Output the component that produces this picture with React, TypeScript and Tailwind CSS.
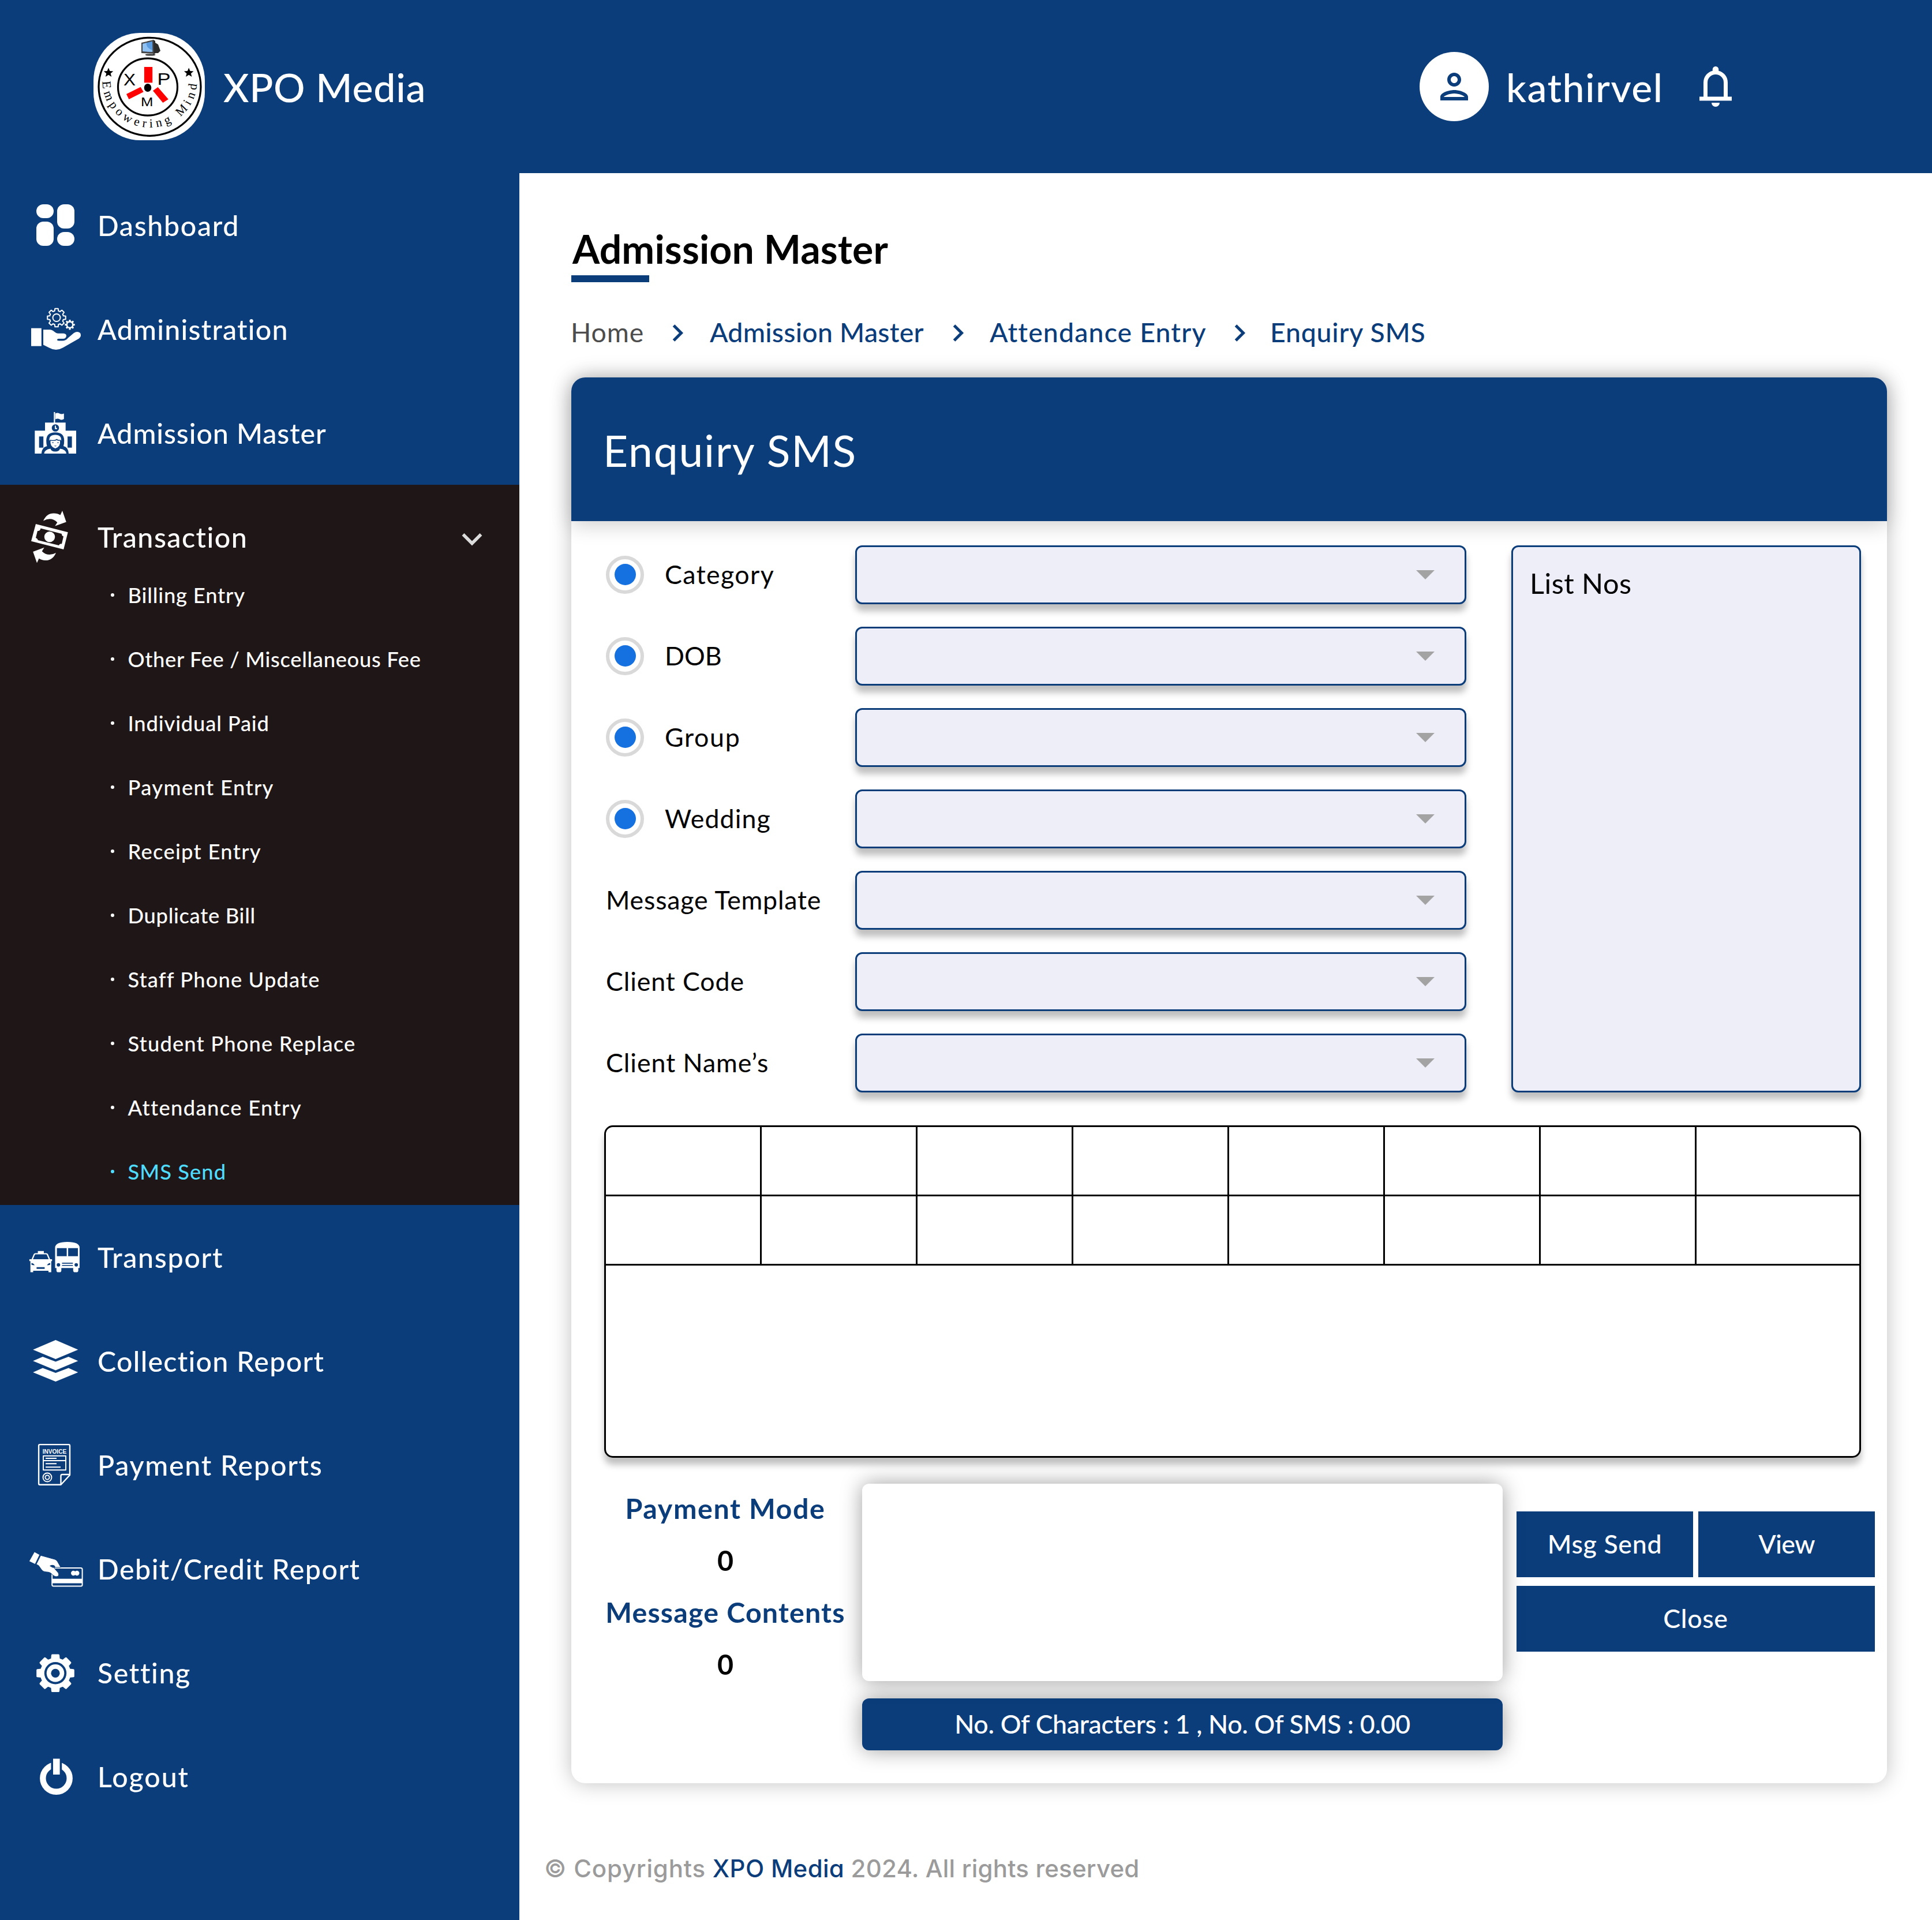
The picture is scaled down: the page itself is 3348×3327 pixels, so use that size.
import type { ReactNode } from "react";

const NAVY = "#0b3d7b";

/** Closed outline of a cog wheel with flat, slightly tapered teeth. */
function cog(cx: number, cy: number, outer: number, inner: number, teeth: number, rootHalf: number, tipHalf: number) {
  const pts: string[] = [];
  for (let i = 0; i < teeth; i++) {
    const a = (i * 2 * Math.PI) / teeth - Math.PI / 2;
    const corners: [number, number][] = [
      [inner, a - rootHalf],
      [outer, a - tipHalf],
      [outer, a + tipHalf],
      [inner, a + rootHalf],
    ];
    for (const [r, t] of corners) {
      pts.push(`${(cx + r * Math.cos(t)).toFixed(2)} ${(cy + r * Math.sin(t)).toFixed(2)}`);
    }
  }
  return `M${pts.join("L")}Z`;
}

function MenuIcon({ children }: { children: ReactNode }) {
  return (
    <svg viewBox="0 0 96 96" className="size-24 shrink-0 overflow-visible" fill="#fff">
      {children}
    </svg>
  );
}

const DashboardIcon = () => (
  <MenuIcon>
    <rect x="15" y="12" width="30" height="24" rx="12" />
    <rect x="15" y="42" width="30" height="42" rx="12" />
    <rect x="51" y="12" width="30" height="42" rx="12" />
    <rect x="51" y="60" width="30" height="24" rx="12" />
  </MenuIcon>
);

const AdministrationIcon = () => (
  <MenuIcon>
    <rect x="6" y="46.7" width="17.8" height="31" />
    <path d="M27 49.3H38C45 49.3 47 55.7 53 55.7H62Q67 56 67 60Q66.500 65 61 65H53.500Q51 65.300 51 66.800Q51 68.500 54 68.500H60Q66 68.500 70 63.500L80 55Q86 51 91 55Q94 60 89 64.500L61 80.500Q49 87.500 37 80.500L27 75.500Z" />
    <path d={cog(50, 28.5, 16, 12.2, 8, 0.27, 0.17)} fill="none" stroke="#fff" strokeWidth="2" strokeLinejoin="round" />
    <circle cx="50" cy="28.500" r="6.500" fill="none" stroke="#fff" strokeWidth="2" />
    <path d={cog(73, 40.7, 8.8, 6.4, 8, 0.28, 0.16)} />
    <circle cx="73" cy="40.700" r="4" fill={NAVY} />
  </MenuIcon>
);

const AdmissionIcon = () => (
  <MenuIcon>
    <path d="M12.300 44.300H30V30.300H65.700V44.300H84V84H12.300Z" />
    <rect x="45.300" y="12" width="2.200" height="19" />
    <path d="M48 14.500Q51.500 12.500 55 14.500T62.800 14.500V24Q59 26.500 55.500 24.500T48 24.500Z" />
    <ellipse cx="48" cy="39.500" rx="6.300" ry="6.300" fill={NAVY} />
    <path d="M48 35.500V40.500H51" fill="none" stroke="#fff" strokeWidth="1.800" />
    <rect x="19.700" y="54.300" width="7.500" height="19.400" fill={NAVY} />
    <rect x="69.100" y="54.300" width="7.500" height="19.400" fill={NAVY} />
    <path d="M23.800 84Q24.500 73 33.500 71Q32.200 68 32.200 62Q32 47.300 47.800 47.300Q63.500 47.300 63.200 62Q63.200 68 62 71Q70.500 73 71 84Z" fill={NAVY} />
    <path d="M37.500 62Q36.500 51.500 47.800 51.500Q59 51.500 58 62L57 60Q52.500 61 50.500 58.500Q46 62 38.500 60Z" />
    <path d="M39.500 61.500Q38 72 47.800 75Q57.500 72 56 61.500Q52 62.500 50.500 60.500Q46.500 63 39.500 61.500Z" />
    <path d="M42 65H45M51 65H54M46.500 70.500Q48 71.500 49.500 70.500" fill="none" stroke={NAVY} strokeWidth="1" />
    <path d="M28.500 84Q29 77 39.500 75.500Q41 80.500 47.800 80.500Q54.500 80.500 56 75.500Q66.500 77 67 84Z" />
  </MenuIcon>
);

const TransactionIcon = () => (
  <MenuIcon>
    <path
      fillRule="evenodd"
      d="M14 26L69.700 40.200L62.200 70L6 55.700ZM22.500 33.500Q21.500 38.500 17 38L14 50Q18 52 17.500 54L54 63Q55.500 59.500 59 60.500L62 47.500Q58.500 46 59 43Z"
    />
    <circle cx="38" cy="48.200" r="9.200" />
    <path d="M27 20.500Q33 7 45.600 7.400Q52 7.500 56.500 10.600L60 3L66.800 22.500L47.300 29.600L51.300 23.200Q41 13 27 20.500Z" />
    <path d="M49 75.900Q43 89.400 30.400 89Q24 88.900 19.500 85.800L16 93.400L9.200 73.900L28.700 66.800L24.700 73.200Q35 83.400 49 75.900Z" />
  </MenuIcon>
);

const TransportIcon = () => (
  <MenuIcon>
    <rect x="17.600" y="37.800" width="10.400" height="4.800" />
    <path d="M7.500 53L11.500 43.500Q12 42.500 13.500 42.500H32Q33.500 42.500 34 43.500L38 53" fill="none" stroke="#fff" strokeWidth="2.200" />
    <path fillRule="evenodd" d="M2.900 52H42.200V55.200H40.800V74.600H36V72H9.500V74.600H4.700V55.200H2.900ZM6.500 58.500V61.500Q9 62.500 12 62.500Q10.500 59 6.500 58.500ZM39 58.500V61.500Q36.500 62.500 33.500 62.500Q35 59 39 58.500ZM15.400 65.700V68.700H29.400V65.700Z" />
    <path
      fillRule="evenodd"
      d="M47.500 32Q47.500 22 68.700 22Q89.900 22 89.900 32V67.300H87.700V71.500Q87.700 74.600 84.500 74.600H82Q78.800 74.600 78.800 71.500V67.300H58.300V71.500Q58.300 74.600 55.200 74.600H53Q49.800 74.600 49.800 71.500V67.300H47.500ZM50.600 32.800V46.800H67.600V32.800ZM70.100 32.800V46.800H87V32.800ZM59.500 58V59.800H78.300V58ZM59.500 62V63.500H78.300V62Z"
    />
    <circle cx="53.300" cy="61.800" r="3" fill={NAVY} />
    <circle cx="84.100" cy="61.800" r="3" fill={NAVY} />
  </MenuIcon>
);

const CollectionIcon = () => (
  <MenuIcon>
    <path d="M48.400 12L87.300 28.800L48.400 45L9.200 28.800Z" />
    <path d="M26 41L48.400 49.500L70.700 41L87.300 48.300L48.400 64.500L9.200 48.300Z" />
    <path d="M26 60.600L48.400 69.100L70.700 60.600L87.300 67.900L48.400 84.100L9.200 67.900Z" />
  </MenuIcon>
);

const InvoiceIcon = () => (
  <MenuIcon>
    <g fill="none" stroke="#fff" strokeWidth="2.400" strokeLinejoin="round">
      <path d="M21 13.100H71Q73 13.100 73 15.100V66L57.500 82.800H21Q19.100 82.800 19.100 80.800V15.100Q19.100 13.100 21 13.100Z" />
      <path d="M57.500 82V67.500Q57.500 65 60 65H73" />
      <g strokeWidth="1.900">
        <rect x="27" y="32.800" width="39" height="24.500" />
        <path d="M27 41H66M31 37H50M31 46.200H50M31 52.200H57" />
        <circle cx="34" cy="70" r="7.500" />
        <circle cx="34" cy="70" r="3.600" />
      </g>
    </g>
    <text x="25.700" y="28.500" fontSize="11.500" fontWeight="700" textLength="41.500" lengthAdjust="spacingAndGlyphs" className="font-['Liberation_Sans',sans-serif]">
      INVOICE
    </text>
  </MenuIcon>
);

const CardIcon = () => (
  <MenuIcon>
    <rect x="42.200" y="46.900" width="52.400" height="31.600" rx="2.500" fill="none" stroke="#fff" strokeWidth="2" />
    <rect x="42" y="65.700" width="53" height="7.800" />
    <circle cx="79.200" cy="56" r="4.200" />
    <circle cx="85.300" cy="56" r="4.200" />
    <path d="M11.800 19.600L20.300 24.300L12.700 40L2.900 35.300Z" />
    <path
      d="M22.500 25.200L47 32Q50.500 33 52 36.500L57.400 46H45L53 55.500Q55 59 52.500 61.500Q49 63 45 60.500L39.500 55.500Q36 53.800 31 53.800Q26.500 53.500 24 50L19 43L14.800 40.600Z"
      stroke={NAVY}
      strokeWidth="1"
    />
    <path d="M38 43.500Q41 40.500 46 42.500Q48.500 45 47.500 46.500H43Z" fill={NAVY} />
  </MenuIcon>
);

const SettingIcon = () => (
  <MenuIcon>
    <path d={cog(48, 49.3, 31.5, 25, 8, 0.24, 0.17)} stroke="#fff" strokeWidth="3.500" strokeLinejoin="round" />
    <circle cx="48" cy="49.300" r="19.200" fill={NAVY} />
    <circle cx="48" cy="49.300" r="15.300" />
    <circle cx="48" cy="49.300" r="7.600" fill={NAVY} />
  </MenuIcon>
);

const LogoutIcon = () => (
  <MenuIcon>
    <circle cx="49.500" cy="51.600" r="23.200" fill="none" stroke="#fff" strokeWidth="10.400" />
    <rect x="40.400" y="18" width="18.800" height="24" fill={NAVY} />
    <rect x="44" y="17.500" width="11.600" height="27.500" />
  </MenuIcon>
);

function Logo() {
  const star = "M0 -8.500L2.300 -2.900L8.300 -2.600L3.700 1.200L5.200 7L0 3.800L-5.200 7L-3.700 1.200L-8.300 -2.600L-2.300 -2.900Z";
  return (
    <svg viewBox="0 0 193 186" className="h-[186px] w-[193px] shrink-0">
      <rect width="193" height="186" rx="81" ry="83" fill="#fff" />
      <ellipse cx="97.500" cy="93.300" rx="88.500" ry="85" fill="none" stroke="#000" strokeWidth="3.200" />
      <ellipse cx="94" cy="93.700" rx="51.500" ry="49.500" fill="none" stroke="#000" strokeWidth="3.200" />
      <g fill="#f00">
        <path d="M87.900 59H102.200V86.300H87.900Z" />
        <path d="M57 106L81.600 93.700L86.700 102.300L61.400 115Z" />
        <path d="M103 100.300L111.600 94L129.800 115L120.300 121Z" />
      </g>
      <ellipse cx="94" cy="95" rx="6.300" ry="7" />
      <path d={star} transform="translate(26 69)" />
      <path d={star} transform="translate(165.200 69)" />
      <g className="font-['Liberation_Sans',sans-serif]" fontSize="30">
        <text x="52" y="91" textLength="21" lengthAdjust="spacingAndGlyphs">X</text>
        <text x="110.500" y="90" textLength="23" lengthAdjust="spacingAndGlyphs">P</text>
        <text x="82" y="127" fontSize="22.500" textLength="21.500" lengthAdjust="spacingAndGlyphs">M</text>
      </g>
      <path id="motto-arc" d="M15.500 84A82 80 0 0 0 179.500 84" fill="none" />
      <text fontSize="21.500" className="font-['Liberation_Serif',serif]" textLength="249">
        <textPath href="#motto-arc" textLength="249">Empowering Mind</textPath>
      </text>
      <path d="M104 12L107 14V36L103 37ZM107 17L112 20L116 31L112 35L107 35Z" fill="#2b2b2b" />
      <path d="M83 17L104 12L105 36L83 35Z" fill="#444" />
      <path d="M85 19L102 14.500L102.500 33L85 32Z" fill="#5b9be0" />
      <path d="M85 19L92 17.200Q90 25 102 30V33L85 32Z" fill="#8fc1f2" />
      <ellipse cx="98.500" cy="38" rx="9" ry="1.600" fill="#333" />
    </svg>
  );
}

type Entry = { label: string; track: string };

const topMenu: (Entry & { icon: ReactNode })[] = [
  { label: "Dashboard", track: "tracking-[0.0340em]", icon: <DashboardIcon /> },
  { label: "Administration", track: "tracking-[0.0250em]", icon: <AdministrationIcon /> },
  { label: "Admission Master", track: "tracking-[0.0183em]", icon: <AdmissionIcon /> },
];

const transactionMenu: Entry[] = [
  { label: "Billing Entry", track: "tracking-[0.0220em]" },
  { label: "Other Fee / Miscellaneous Fee", track: "tracking-[0.0175em]" },
  { label: "Individual Paid", track: "tracking-[0.0220em]" },
  { label: "Payment Entry", track: "tracking-[0.0370em]" },
  { label: "Receipt Entry", track: "tracking-[0.0350em]" },
  { label: "Duplicate Bill", track: "tracking-[0.0180em]" },
  { label: "Staff Phone Update", track: "tracking-[0.0300em]" },
  { label: "Student Phone Replace", track: "tracking-[0.0310em]" },
  { label: "Attendance Entry", track: "tracking-[0.0366em]" },
  { label: "SMS Send", track: "tracking-[0.0280em]" },
];

const bottomMenu: (Entry & { icon: ReactNode })[] = [
  { label: "Transport", track: "tracking-[0.0346em]", icon: <TransportIcon /> },
  { label: "Collection Report", track: "tracking-[0.0260em]", icon: <CollectionIcon /> },
  { label: "Payment Reports", track: "tracking-[0.0355em]", icon: <InvoiceIcon /> },
  { label: "Debit/Credit Report", track: "tracking-[0.0300em]", icon: <CardIcon /> },
  { label: "Setting", track: "tracking-[0.0330em]", icon: <SettingIcon /> },
  { label: "Logout", track: "tracking-[0.0390em]", icon: <LogoutIcon /> },
];

const fields: (Entry & { radio?: boolean })[] = [
  { label: "Category", track: "tracking-[0.0320em]", radio: true },
  { label: "DOB", track: "tracking-[0.0000em]", radio: true },
  { label: "Group", track: "tracking-[0.0382em]", radio: true },
  { label: "Wedding", track: "tracking-[0.0240em]", radio: true },
  { label: "Message Template", track: "tracking-[0.0182em]" },
  { label: "Client Code", track: "tracking-[0.0200em]" },
  { label: "Client Name’s", track: "tracking-[0.0215em]" },
];

function MenuRow({ label, track, icon }: Entry & { icon: ReactNode }) {
  return (
    <li className="flex h-[180px] items-center gap-[25px] pl-12">
      {icon}
      <span className={`text-[48.4px] whitespace-nowrap ${track}`}>{label}</span>
    </li>
  );
}

function Sidebar() {
  return (
    <nav className="w-[900px] shrink-0 bg-[#0b3d7b] font-medium text-white">
      <ul>
        {topMenu.map((m) => (
          <MenuRow key={m.label} {...m} />
        ))}
        <li className="bg-[#1f1617] pt-[46px] pb-1">
          <div className="flex h-[88px] items-center gap-[25px] pr-16 pl-12">
            <TransactionIcon />
            <span className="text-[48.4px] tracking-[0.0300em]">Transaction</span>
            <svg viewBox="0 0 36 24" className="mt-[10px] ml-auto h-6 w-9" fill="none" stroke="#dcdcdc" strokeWidth="5.500">
              <path d="M2.500 3L18 18.500L33.500 3" />
            </svg>
          </div>
          <ul>
            {transactionMenu.map((m) => (
              <li
                key={m.label}
                className={`flex h-[111px] items-center gap-[23.5px] pl-48 text-[36.4px] whitespace-nowrap ${m.track} ${
                  m.label === "SMS Send" ? "text-[#4fdcff]" : ""
                }`}
              >
                <span className="mt-0.5 size-1.5 rounded-full bg-current" />
                <span className="mt-[3px]">{m.label}</span>
              </li>
            ))}
          </ul>
        </li>
        {bottomMenu.map((m) => (
          <MenuRow key={m.label} {...m} />
        ))}
      </ul>
    </nav>
  );
}

function Header() {
  return (
    <header className="flex h-[300px] items-center bg-[#0b3d7b] pr-[333px] pl-[162px] font-medium text-white">
      <Logo />
      <span className="ml-8 pt-px text-[68px] tracking-[0.0111em]">XPO Media</span>
      <div className="ml-auto flex size-[120px] items-center justify-center rounded-full bg-white">
        <svg viewBox="0 0 24 24" className="size-[72px]" fill={NAVY}>
          <path d="M12 6c1.100 0 2 .9 2 2s-.9 2-2 2-2-.9-2-2 .9-2 2-2m0 10c2.700 0 5.800 1.290 6 2H6c.23-.72 3.310-2 6-2m0-12C9.790 4 8 5.790 8 8s1.790 4 4 4 4-1.790 4-4-1.790-4-4-4m0 10c-2.670 0-8 1.340-8 4v2h16v-2c0-2.660-5.330-4-8-4" />
        </svg>
      </div>
      <span className="ml-[30px] w-[321px] pt-px text-[68px] tracking-[0.0216em]">kathirvel</span>
      <svg viewBox="0 0 24 24" className="-mt-px size-[84px]" fill="#fff">
        <path d="M4 19v-2h2v-7q0-2.075 1.250-3.687T10.500 4.200v-.7q0-.625.438-1.062T12 2t1.063.438T13.500 3.500v.7q2 .5 3.250 2.113T18 10v7h2v2zm8 3q-.825 0-1.412-.587T10 20h4q0 .825-.587 1.413T12 22m-4-5h8v-7q0-1.650-1.175-2.825T12 6T9.175 7.175T8 10z" />
      </svg>
    </header>
  );
}

function Chevron() {
  return (
    <svg viewBox="0 0 20 30" className="mt-px h-[30px] w-5" fill="none" stroke={NAVY} strokeWidth="5">
      <path d="M2.500 2L15.500 15L2.500 28" />
    </svg>
  );
}

function Breadcrumb() {
  return (
    <div className="mt-[51px] flex h-[72px] items-center text-[46.4px] font-medium whitespace-nowrap text-[#0b3d7b]">
      <span className="w-[175px] -translate-x-px font-normal tracking-[0.0180em] text-[#4d4d4d]">Home</span>
      <span className="w-[65px]"><Chevron /></span>
      <span className="w-[421px] tracking-[0.0056em]">Admission Master</span>
      <span className="w-[64px]"><Chevron /></span>
      <span className="w-[424px] tracking-[0.0250em]">Attendance Entry</span>
      <span className="w-[62px]"><Chevron /></span>
      <span className="tracking-[0.0173em]">Enquiry SMS</span>
    </div>
  );
}

function Field({ label, track, radio }: Entry & { radio?: boolean }) {
  return (
    <div className="flex h-[102px] items-center">
      <div className="flex w-[435px] shrink-0 items-center pl-[3px] whitespace-nowrap">
        {radio && (
          <span className="mr-9 flex size-[66px] items-center justify-center rounded-full border-[6px] border-[#d9d9d9] bg-white">
            <span className="size-[37px] rounded-full bg-[#1570e0]" />
          </span>
        )}
        <span className={`mb-px text-[44.7px] ${track}`}>{label}</span>
      </div>
      <div className="flex h-[102px] w-[1059px] items-center justify-end rounded-xl border-[3px] border-[#0b3d7b] bg-[#eeeef8] pr-[52px] shadow-[0_12px_12px_rgba(0,0,0,0.25)]">
        <svg viewBox="0 0 32 16" className="h-4 w-8" fill="#a3a3a3">
          <path d="M0 0H32L16 16Z" />
        </svg>
      </div>
    </div>
  );
}

function Grid() {
  const cells = [0, 1, 2, 3, 4, 5, 6, 7];
  return (
    <div className="mt-[57px] h-[576px] w-[2178px] rounded-[15px] border-[3px] border-black bg-white shadow-[0_12px_12px_rgba(0,0,0,0.25)]">
      {[0, 1].map((row) => (
        <div key={row} className="flex h-[120px] border-b-[3px] border-black">
          {cells.map((c) => (
            <div key={c} className={c < 7 ? "w-[270px] border-r-[3px] border-black" : "flex-1"} />
          ))}
        </div>
      ))}
    </div>
  );
}

function Footing() {
  return (
    <div className="flex">
      <div className="mt-[42px] w-[420px] text-center text-[48.4px] leading-[90px] font-bold whitespace-nowrap">
        <p className="tracking-[0.0330em] text-[#0b3d7b]">Payment Mode</p>
        <p>0</p>
        <p className="tracking-[0.0241em] text-[#0b3d7b]">Message Contents</p>
        <p>0</p>
      </div>
      <div className="mt-[45px] ml-[27px] w-[1110px]">
        <div className="relative z-10 h-[342px] rounded-xl bg-white shadow-[0_0_36px_rgba(0,0,0,0.38)]" />
        <div className="mt-[30px] flex h-[90px] items-center justify-center rounded-xl bg-[#0b3d7b] pb-px text-[44.7px] font-medium tracking-[-0.0070em] text-white shadow-[0_0_36px_rgba(0,0,0,0.38)]">
          No. Of Characters : 1 , No. Of SMS : 0.00
        </div>
      </div>
      <div className="mt-[93px] ml-6 grid w-[621px] grid-cols-2 content-start gap-x-[9px] gap-y-[15px] text-[44.7px] font-medium text-white">
        <button className="h-[114px] bg-[#0b3d7b] tracking-[0.0158em]">Msg Send</button>
        <button className="h-[114px] bg-[#0b3d7b] tracking-[-0.0131em]">View</button>
        <button className="col-span-2 h-[114px] bg-[#0b3d7b] tracking-[0.0151em]">Close</button>
      </div>
    </div>
  );
}

export default function App() {
  return (
    <div className="flex h-[3327px] w-[3348px] flex-col bg-white font-['Lato',sans-serif] text-black">
      <Header />
      <div className="flex min-h-0 flex-1">
        <Sidebar />
        <main className="flex-1 pl-[90px]">
          <h1 className="mt-[90px] h-[82px] pl-0.5 text-[68px] leading-[82px] font-bold tracking-[0.0020em]">Admission Master</h1>
          <div className="mt-[5px] h-3 w-[135px] bg-[#0b3d7b]" />
          <Breadcrumb />
          <section className="mt-[42px] h-[2436px] w-[2280px] rounded-3xl bg-white shadow-[0_0_36px_rgba(0,0,0,0.25)]">
            <h2 className="flex h-[249px] items-center rounded-t-3xl bg-[#0b3d7b] pt-1 pl-[55px] text-[75px] font-normal tracking-[0.0240em] text-white shadow-[0_6px_36px_rgba(0,0,0,0.2)]">
              Enquiry SMS
            </h2>
            <div className="pt-[42px] pl-[57px]">
              <div className="flex gap-[78px]">
                <div className="flex flex-col gap-[39px]">
                  {fields.map((f) => (
                    <Field key={f.label} {...f} />
                  ))}
                </div>
                <div className="h-[948px] w-[606px] rounded-xl border-[3px] border-[#0b3d7b] bg-[#eeeef8] pt-8 pl-[29px] text-[48.6px] leading-[60px] tracking-[0.0105em] shadow-[0_12px_12px_rgba(0,0,0,0.25)]">
                  List Nos
                </div>
              </div>
              <Grid />
              <Footing />
            </div>
          </section>
          <footer className="mt-[118px] -ml-[47px] font-['Inter',sans-serif] text-[42px] leading-[60px] font-medium tracking-[0.0190em] whitespace-pre text-[#9b9b9b] [font-feature-settings:'cv11']">
            © Copyrights <span className="tracking-[0.0080em] text-[#0b3d7b]">XPO Media</span>
            <span className="tracking-[0.0050em]"> 2024. All rights reserved</span>
          </footer>
        </main>
      </div>
    </div>
  );
}
